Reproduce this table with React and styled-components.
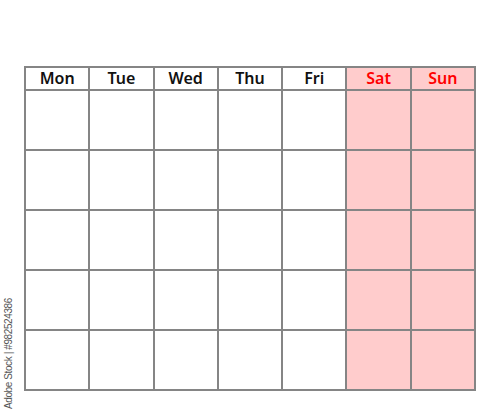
import React from 'react';
import styled, { createGlobalStyle } from 'styled-components';

const GlobalStyle = createGlobalStyle`
	html, body {
		margin: 0;
		padding: 0;
		background: #ffffff;
	}
	body {
		font-family: 'Noto Sans', 'DejaVu Sans', sans-serif;
	}
`;

const days = ['Mon', 'Tue', 'Wed', 'Thu', 'Fri', 'Sat', 'Sun'];
const weeks = 5;

const App = () => (
	<>
		<GlobalStyle />
		<Page>
			<Calendar>
				{days.map((d, i) => (
					<HeaderCell key={d} weekend={i > 4}>
						{d}
					</HeaderCell>
				))}
				{Array.from({ length: weeks * 7 }, (_, i) => (
					<DayCell key={i} weekend={i % 7 > 4} />
				))}
			</Calendar>
			<Credit>Adobe Stock | #982524386</Credit>
		</Page>
	</>
);

export default App;

const Page = styled.div`
	position: relative;
	width: 500px;
	height: 417px;
	padding: 66px 0 0 24px;
	box-sizing: border-box;
	overflow: hidden;
`;

const Calendar = styled.div`
	display: grid;
	width: 452px;
	box-sizing: border-box;
	grid-template-columns: repeat(7, 1fr);
	grid-template-rows: 21px repeat(5, 58px);
	gap: 2px;
	padding: 2px;
	background: #858585;
`;

const HeaderCell = styled.div`
	display: flex;
	align-items: center;
	justify-content: center;
	padding-bottom: 2px;
	box-sizing: border-box;
	background: ${(p) => (p.weekend ? '#ffcccc' : '#ffffff')};
	color: ${(p) => (p.weekend ? '#ff0000' : '#111111')};
	font-size: 16px;
	font-weight: 600;
	line-height: 1;
`;

const DayCell = styled.div`
	background: ${(p) => (p.weekend ? '#ffcccc' : '#ffffff')};
`;

const Credit = styled.span`
	position: absolute;
	left: 2px;
	top: 409px;
	transform: rotate(-90deg);
	transform-origin: 0 0;
	white-space: nowrap;
	font-family: 'Liberation Sans', Arial, sans-serif;
	font-size: 10px;
	letter-spacing: -0.4px;
	line-height: 13px;
	color: #555555;
`;
